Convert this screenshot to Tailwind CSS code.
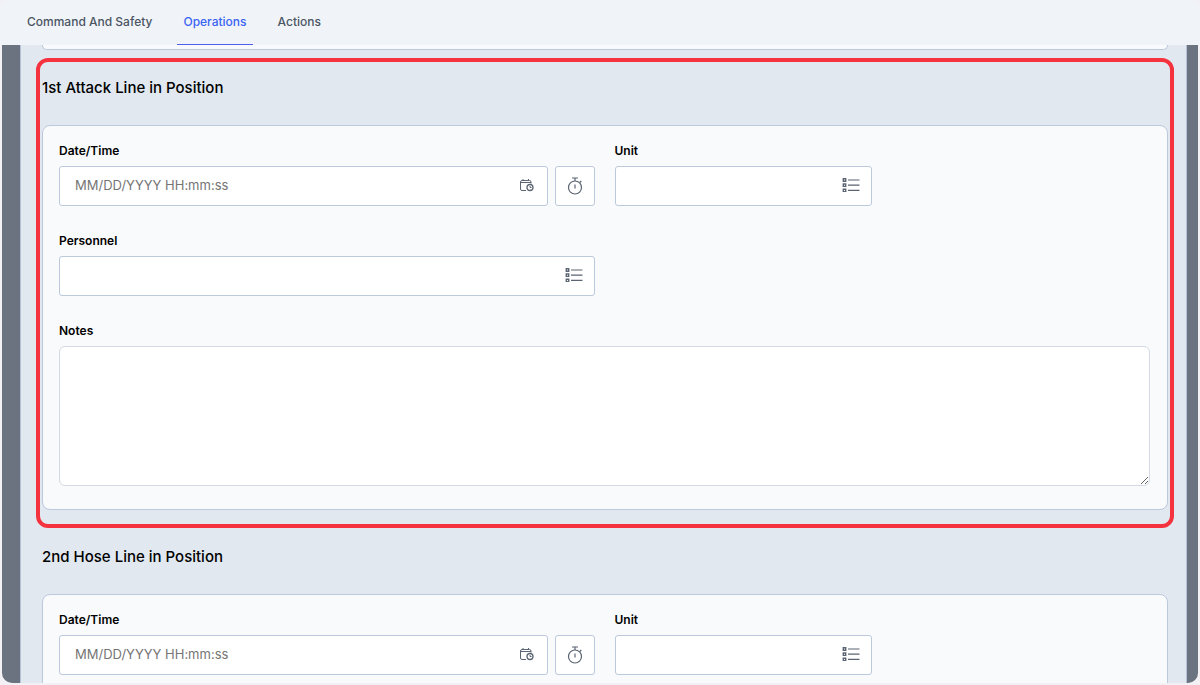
<!DOCTYPE html>
<html lang="en">
<head>
  <meta charset="UTF-8">
  <meta name="viewport" content="width=device-width, initial-scale=1.0">
  <title>Operations</title>
  <script src="https://cdn.jsdelivr.net/npm/@tailwindcss/browser@4"></script>
</head>
<body class="flex flex-col h-screen overflow-hidden pb-0.5 bg-[#f3f1f6] font-[Inter,'Liberation_Sans',sans-serif] text-black">

  <!-- icons -->
  <svg class="hidden">
    <symbol id="icon-calendar" viewBox="0 0 14 14" fill="none" stroke="currentColor">
      <path d="M6 12.5H2A1.5 1.5 0 0 1 .5 11V4A1.5 1.5 0 0 1 2 2.500H9.500A1.500 1.500 0 0 1 11 4V5.500M.5 4.500H11M3 1V3M8.500 1V3" />
      <circle cx="10" cy="9.500" r="3" stroke-width="1.3" />
      <path d="M10 8V9.500H11.500" />
    </symbol>
    <symbol id="icon-stopwatch" viewBox="0 0 16 18" fill="none" stroke="currentColor" stroke-width="1.2">
      <circle cx="8" cy="10.500" r="6.500" />
      <path d="M5 1H11M8 1V4M8 7.500V11.500M12.800 5.500L14.300 4" />
    </symbol>
    <symbol id="icon-list" viewBox="0 0 18 14" fill="none" stroke="currentColor">
      <path stroke-width="1.200" d="M6 2H17.500M6 7.200H17.500M6 12.400H17.500" />
      <path stroke-width="1.400" d="M1.300 .8H3.700V3.200H1.300ZM1.300 6H3.700V8.400H1.300ZM1.300 11.200H3.700V13.600H1.300Z" />
    </symbol>
  </svg>

  <header class="shrink-0 bg-[#f0f4f9] rounded-t-[10px]">
    <nav class="flex gap-[19px] h-[45px] px-[21px] text-xs font-medium text-[#4b5563]">
      <a href="#" class="flex items-center px-1.5 border-b border-transparent">Command And Safety</a>
      <a href="#" class="flex items-center px-1.5 border-b border-[#4f5ff0] text-[#3b63f3]">Operations</a>
      <a href="#" class="flex items-center px-1.5 border-b border-transparent">Actions</a>
    </nav>
  </header>

  <main class="flex-1 min-h-0 mx-0.5 pl-[18px] pr-[11px] overflow-hidden rounded-b-[10px] bg-[#6b7280]">
    <div class="min-h-full pl-[21px] pr-[18px] bg-[#e1e8f0] border-x border-[#b4c2d8]">
      <!-- end of the previous section -->
      <div class="h-[5px] bg-[#f9fafc] border border-t-0 border-[#bcc8dc] rounded-b-lg"></div>

      <section class="relative mt-[26px]">
        <h2 class="mb-[25px] text-[15px] leading-6 font-medium">1st Attack Line in Position</h2>
        <div class="grid grid-cols-4 gap-x-5 gap-y-[27px] pl-4 pr-[17px] pt-[17px] pb-[23px] bg-[#f9fafc] border border-[#bcc8dc] rounded-lg text-xs">
          <div class="col-span-2">
            <label for="date1" class="block mb-[7px] font-semibold">Date/Time</label>
            <div class="flex gap-[7px]">
              <div class="relative flex-1">
                <input id="date1" type="text" placeholder="MM/DD/YYYY HH:mm:ss" class="block w-full h-10 pl-[15px] pr-10 pb-0.5 text-[13px] bg-white border border-[#bcc8dc] rounded-[3px] placeholder:text-[#757575]">
                <svg class="absolute right-3.5 top-3 size-3.5 text-[#5b6472]"><use href="#icon-calendar" /></svg>
              </div>
              <button type="button" aria-label="Set current time" class="flex items-center justify-center size-10 bg-white border border-[#bcc8dc] rounded-[3px] text-[#5b6472]">
                <svg class="w-4 h-[18px]"><use href="#icon-stopwatch" /></svg>
              </button>
            </div>
          </div>
          <div>
            <label for="unit1" class="block mb-[7px] font-semibold">Unit</label>
            <div class="relative">
              <input id="unit1" type="text" class="block w-full h-10 pl-[15px] pr-10 text-[13px] bg-white border border-[#bcc8dc] rounded-[3px]">
              <svg class="absolute right-3 top-3 w-[18px] h-3.5 text-[#5b6472]"><use href="#icon-list" /></svg>
            </div>
          </div>
          <div class="col-span-2 col-start-1">
            <label for="personnel1" class="block mb-[7px] font-semibold">Personnel</label>
            <div class="relative">
              <input id="personnel1" type="text" class="block w-full h-10 pl-[15px] pr-10 text-[13px] bg-white border border-[#bcc8dc] rounded-[3px]">
              <svg class="absolute right-3 top-3 w-[18px] h-3.5 text-[#5b6472]"><use href="#icon-list" /></svg>
            </div>
          </div>
          <div class="col-span-4">
            <label for="notes1" class="block mb-[7px] font-semibold">Notes</label>
            <textarea id="notes1" class="block w-full h-[140px] px-[15px] py-2 text-[13px] bg-white border border-[#d3dae4] rounded-md"></textarea>
          </div>
        </div>
        <!-- highlight frame -->
        <div class="absolute -inset-x-1.5 -inset-y-[18px] border-4 border-[#f5333f] rounded-xl pointer-events-none"></div>
      </section>

      <section class="mt-[35px]">
        <h2 class="mb-[25px] text-[15px] leading-6 font-medium">2nd Hose Line in Position</h2>
        <div class="grid grid-cols-4 gap-x-5 gap-y-[27px] pl-4 pr-[17px] pt-[17px] pb-[23px] bg-[#f9fafc] border border-[#bcc8dc] rounded-lg text-xs">
          <div class="col-span-2">
            <label for="date2" class="block mb-[7px] font-semibold">Date/Time</label>
            <div class="flex gap-[7px]">
              <div class="relative flex-1">
                <input id="date2" type="text" placeholder="MM/DD/YYYY HH:mm:ss" class="block w-full h-10 pl-[15px] pr-10 pb-0.5 text-[13px] bg-white border border-[#bcc8dc] rounded-[3px] placeholder:text-[#757575]">
                <svg class="absolute right-3.5 top-3 size-3.5 text-[#5b6472]"><use href="#icon-calendar" /></svg>
              </div>
              <button type="button" aria-label="Set current time" class="flex items-center justify-center size-10 bg-white border border-[#bcc8dc] rounded-[3px] text-[#5b6472]">
                <svg class="w-4 h-[18px]"><use href="#icon-stopwatch" /></svg>
              </button>
            </div>
          </div>
          <div>
            <label for="unit2" class="block mb-[7px] font-semibold">Unit</label>
            <div class="relative">
              <input id="unit2" type="text" class="block w-full h-10 pl-[15px] pr-10 text-[13px] bg-white border border-[#bcc8dc] rounded-[3px]">
              <svg class="absolute right-3 top-3 w-[18px] h-3.5 text-[#5b6472]"><use href="#icon-list" /></svg>
            </div>
          </div>
        </div>
      </section>
    </div>
  </main>
</body>
</html>
